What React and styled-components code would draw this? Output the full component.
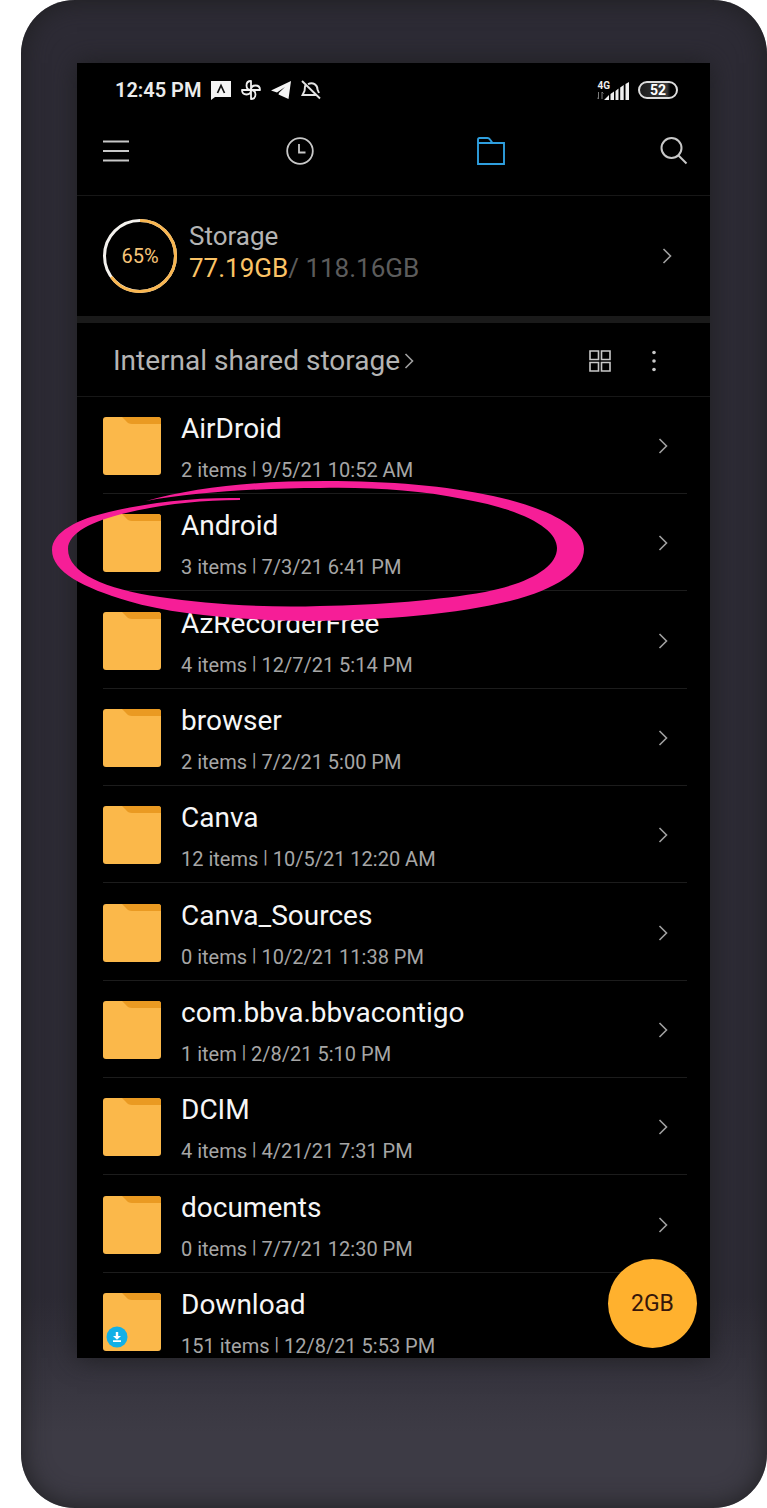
import React from "react";
import styled, { createGlobalStyle } from "styled-components";

const GlobalStyle = createGlobalStyle`
  *, *::before, *::after { box-sizing: border-box; }
  body {
    margin: 0;
    background: #fff;
    font-family: Roboto, "Liberation Sans", sans-serif;
  }
`;

const Page = styled.div`
  padding-left: 21px;
`;

const Phone = styled.div`
  min-height: 100vh;
  padding: 63px 57px 150px 56px;
  border-radius: 54px;
  background: linear-gradient(#2d2b35 0%, #2d2b35 86%, #3d3b45 95%, #3d3b45 100%);
  box-shadow: inset 0 0 26px #1f1f21;
`;

const Screen = styled.main`
  position: relative;
  background: #000;
  color: #b4b4b4;
  box-shadow: 0 0 24px #1f1f22;
`;

const StatusBar = styled.div`
  display: flex;
  justify-content: space-between;
  align-items: center;
  height: 54px;
  padding: 0 32px 0 38px;
  color: #ececec;
`;

const StatusGroup = styled.div`
  display: flex;
  align-items: center;
  gap: ${(p) => p.$gap}px;
`;

const Time = styled.time`
  font-size: 20px;
  font-weight: 600;
  line-height: 24px;
`;

const Network = styled.div`
  display: flex;
  align-items: flex-end;
`;

const NetworkType = styled.span`
  display: flex;
  flex-direction: column;
  align-items: flex-start;
  margin-right: -6px;
  font-size: 10px;
  font-weight: 700;
  line-height: 10px;
`;

const Battery = styled.span`
  width: 40px;
  height: 18px;
  border: 2px solid #dcdcdc;
  border-radius: 9px;
  background: linear-gradient(90deg, #1c1c1c, #3a3a3a 75%, #000 85%);
  color: #fff;
  font-size: 14px;
  font-weight: 700;
  line-height: 14px;
  text-align: center;
`;

const Nav = styled.nav`
  display: flex;
  justify-content: space-between;
  align-items: center;
  height: 79px;
  padding: 0 22px 10px 25px;
  border-bottom: 1px solid #171717;
`;

const NavTabs = styled.div`
  display: flex;
  gap: 163px;
`;

const IconButton = styled.button`
  display: flex;
  padding: 0;
  border: 0;
  background: none;
  color: ${(p) => (p.$active ? "#2f9fdf" : "#c8c8c8")};
  cursor: pointer;
`;

const StorageLink = styled.a`
  display: flex;
  align-items: center;
  gap: 12px;
  height: 120px;
  padding: 0 38px 0 26px;
  color: #b4b4b4;
  text-decoration: none;
`;

const Gauge = styled.div`
  display: grid;
  place-items: center;
  width: 74px;
  height: 74px;
  color: #f7c478;
  font-size: 20px;
  line-height: 24px;
  > * { grid-area: 1 / 1; }
`;

const StorageText = styled.div`
  flex: 1;
  padding-bottom: 8px;
  font-size: 26px;
  line-height: 32px;
`;

const Used = styled.span`
  color: #fbc366;
`;

const Total = styled.span`
  color: #5c5c5c;
`;

const PathBar = styled.div`
  display: flex;
  align-items: center;
  justify-content: space-between;
  height: 81px;
  padding: 2px 45px 0 36px;
  border-top: 7px solid #1a1a1a;
  border-bottom: 1px solid #171717;
`;

const PathLink = styled.a`
  display: flex;
  align-items: center;
  gap: 4px;
  color: #b4b4b4;
  font-size: 28px;
  line-height: 32px;
  text-decoration: none;
`;

const PathActions = styled.div`
  display: flex;
  align-items: center;
  gap: 32px;
`;

const FolderList = styled.ul`
  display: flex;
  flex-direction: column;
  justify-content: space-between;
  min-height: 961px;
  margin: 0;
  padding: 0 23px 0 26px;
  list-style: none;
`;

const FolderItem = styled.li`
  position: relative;
  height: 97px;
  border-bottom: 1px solid #1c1c1c;
  &:last-child {
    height: 85px;
    border-bottom: 0;
  }
`;

const FolderLink = styled.a`
  display: flex;
  gap: 20px;
  padding: 16px 19px 0 0;
  color: #fff;
  text-decoration: none;
  > svg { flex: none; }
`;

const FolderArt = styled.svg`
  margin-top: 4px;
`;

const FolderText = styled.div`
  flex: 1;
`;

const FolderName = styled.div`
  font-size: 28px;
  line-height: 32px;
  color: #f6f6f6;
`;

const FolderMeta = styled.div`
  margin-top: 14px;
  font-size: 20px;
  line-height: 23px;
  color: #a6a6a6;
`;

const Bar = styled.span`
  font-size: 18px;
  vertical-align: 3px;
  line-height: 1;
`;

const ChevronIcon = styled.svg`
  flex: none;
`;

const RowChevron = styled(ChevronIcon)`
  margin-top: 25px;
`;

const Circled = styled.svg`
  position: absolute;
  z-index: 1;
  left: -53px;
  top: -18px;
  pointer-events: none;
`;

const CleanButton = styled.button`
  position: absolute;
  right: 13px;
  bottom: 10px;
  width: 89px;
  height: 89px;
  padding: 0;
  border: 0;
  border-radius: 50%;
  background: #ffb12e;
  color: #35160a;
  font: 23px/26px Roboto, "Liberation Sans", sans-serif;
  cursor: pointer;
`;

function Chevron({ as: Icon = ChevronIcon }) {
  return (
    <Icon width="10" height="16" viewBox="0 0 10 16" fill="none" stroke="#a0a0a0" strokeWidth="1.600" aria-hidden="true">
      <path d="M1.500 1L8.500 8L1.500 15" />
    </Icon>
  );
}

function FolderPicture({ download }) {
  return (
    <FolderArt width="58" height="58" viewBox="0 0 58 58" aria-hidden="true">
      <rect width="58" height="58" rx="3" fill="#fbb84a" />
      <path d="M19 0H55a3 3 0 0 1 3 3V7H29Q25 7 23 4Z" fill="#ea9a22" />
      {download && (
        <g>
          <circle cx="14" cy="44" r="10.500" fill="#12b0e6" />
          <path d="M12.800 39h2.400v4h2.800l-4 3.800-4-3.800h2.800zM10 47.200h8v1.800h-8z" fill="#fff" />
        </g>
      )}
    </FolderArt>
  );
}

const folders = [
  { name: "AirDroid", count: "2 items", date: "9/5/21 10:52 AM" },
  { name: "Android", count: "3 items", date: "7/3/21 6:41 PM", circled: true },
  { name: "AzRecorderFree", count: "4 items", date: "12/7/21 5:14 PM" },
  { name: "browser", count: "2 items", date: "7/2/21 5:00 PM" },
  { name: "Canva", count: "12 items", date: "10/5/21 12:20 AM" },
  { name: "Canva_Sources", count: "0 items", date: "10/2/21 11:38 PM" },
  { name: "com.bbva.bbvacontigo", count: "1 item", date: "2/8/21 5:10 PM" },
  { name: "DCIM", count: "4 items", date: "4/21/21 7:31 PM" },
  { name: "documents", count: "0 items", date: "7/7/21 12:30 PM" },
  { name: "Download", count: "151 items", date: "12/8/21 5:53 PM", download: true, last: true },
];

function Folder({ name, count, date, circled, download, last }) {
  return (
    <FolderItem>
      <FolderLink href="#">
        <FolderPicture download={download} />
        <FolderText>
          <FolderName>{name}</FolderName>
          <FolderMeta>
            {count} <Bar>|</Bar> {date}
          </FolderMeta>
        </FolderText>
        {!last && <Chevron as={RowChevron} />}
      </FolderLink>
      {circled && (
        <Circled width="540" height="150" viewBox="50 476 540 150" aria-hidden="true">
          <path
            fill="#f61e97"
            d="M146 501 C195 487 255 481 325 481 C390 481 447 486 493 496 C548 508 584 527 584 549 C584 571 557 589 510 601 C458 614 385 620 310 621 C240 620 175 615 128 601 C84 588 52 572 52 550 C52 532 78 519 109 512 C145 503 195 497 240 498 L240 500 C197 500 160 505 126 513 C92 521 68 533 68 549 C68 573 105 589 160 597 C205 604 265 608 320 606 C380 605 440 600 485 592 C530 583 557 567 557 548 C557 529 525 510 463 499 C418 490 372 487 320 488 C262 488 195 492 146 501 Z"
          />
        </Circled>
      )}
    </FolderItem>
  );
}

export default function App() {
  return (
    <Page>
      <GlobalStyle />
      <Phone>
        <Screen>
          <StatusBar>
            <StatusGroup $gap={10}>
              <Time>12:45 PM</Time>
              <svg width="20" height="20" viewBox="0 0 20 20" aria-hidden="true">
                <path d="M0 1H20V17H4L0 20Z" fill="#f4f4f4" />
                <path d="M6.500 13L10 5.500L13.500 13" fill="none" stroke="#111" strokeWidth="1.700" />
              </svg>
              <svg width="20" height="20" viewBox="0 0 20 20" fill="none" stroke="#f0f0f0" strokeWidth="1.800" strokeLinejoin="round" aria-hidden="true">
                <path d="M10 10V1C7 1 5.500 3 5.500 5.500C5.500 8 7 10 10 10H19C19 7 17 5.500 14.500 5.500C12 5.500 10 7 10 10V19C13 19 14.500 17 14.500 14.500C14.500 12 13 10 10 10H1C1 13 3 14.500 5.500 14.500C8 14.500 10 13 10 10Z" />
              </svg>
              <svg width="20" height="20" viewBox="0 0 20 20" aria-hidden="true">
                <path d="M0 10.500L20 1L17.500 19L7.500 14.500L8 12.800L14 7L6 12.500Z" fill="#f4f4f4" />
              </svg>
              <svg width="20" height="20" viewBox="0 0 20 20" fill="none" stroke="#e4e4e4" strokeWidth="1.900" aria-hidden="true">
                <path d="M1 1L19 18.500M4.500 5C3.500 7 4 9 3.500 11L1.500 15H14.500M7 4.200C12 1.500 16.500 5 16.500 9.500L18 13" />
              </svg>
            </StatusGroup>
            <StatusGroup $gap={9}>
              <Network>
                <NetworkType>
                  4G
                  <svg width="7" height="9" viewBox="0 0 7 9" fill="none" stroke="#7a7a7a" aria-hidden="true">
                    <path d="M1.500 1V8M0 6.500L1.500 8M5 8V1M5 1L6.500 2.500" />
                  </svg>
                </NetworkType>
                <svg width="25" height="18" viewBox="0 0 25 18" fill="#f0f0f0" aria-hidden="true">
                  <path d="M0 18L5 13V18ZM6.500 12L10 9.500V18H6.500ZM11.500 9L14.500 6.500V18H11.500ZM16.200 5.500L19.700 3V18H16.200ZM21.500 2L25 0V18H21.500Z" />
                </svg>
              </Network>
              <Battery>52</Battery>
            </StatusGroup>
          </StatusBar>

          <Nav>
            <IconButton aria-label="Menu">
              <svg width="28" height="28" viewBox="0 0 28 28" stroke="currentColor" strokeWidth="2.200">
                <path d="M1 4.500H27M1 14H27M1 23.500H27" />
              </svg>
            </IconButton>
            <NavTabs>
              <IconButton aria-label="Recent">
                <svg width="28" height="28" viewBox="0 0 28 28" fill="none" stroke="currentColor" strokeWidth="1.800">
                  <circle cx="14" cy="14" r="12.800" />
                  <path d="M13 7V15.500H19.500" />
                </svg>
              </IconButton>
              <IconButton aria-label="Folders" $active>
                <svg width="28" height="28" viewBox="0 0 28 28" fill="none" stroke="currentColor" strokeWidth="1.900">
                  <path d="M1 6V2.500Q1 1 2.500 1H10.500Q12 1 13 2.500L15.500 6H27V27H1V6H15.500" />
                </svg>
              </IconButton>
            </NavTabs>
            <IconButton aria-label="Search">
              <svg width="28" height="28" viewBox="0 0 28 28" fill="none" stroke="currentColor" strokeWidth="2">
                <circle cx="11.500" cy="11" r="10" />
                <path d="M18.500 18.500L26.500 26.500" />
              </svg>
            </IconButton>
          </Nav>

          <StorageLink href="#">
            <Gauge>
              <svg width="74" height="74" viewBox="0 0 74 74" fill="none" strokeWidth="3" aria-hidden="true">
                <circle cx="37" cy="37" r="35.500" stroke="#f4f2ee" />
                <circle cx="37" cy="37" r="35.500" stroke="#f9b650" pathLength="100" strokeDasharray="65 35" transform="rotate(-90 37 37)" />
              </svg>
              <span>65%</span>
            </Gauge>
            <StorageText>
              <div>Storage</div>
              <div>
                <Used>77.19GB</Used>
                <Total>/ 118.16GB</Total>
              </div>
            </StorageText>
            <Chevron />
          </StorageLink>

          <PathBar>
            <PathLink href="#">
              Internal shared storage
              <Chevron />
            </PathLink>
            <PathActions>
              <IconButton aria-label="Grid view">
                <svg width="22" height="22" viewBox="0 0 22 22" fill="none" stroke="currentColor" strokeWidth="1.600">
                  <path d="M1 1H9.500V9.500H1ZM12.500 1H21V9.500H12.500ZM1 12.500H9.500V21H1ZM12.500 12.500H21V21H12.500Z" />
                </svg>
              </IconButton>
              <IconButton aria-label="More options">
                <svg width="22" height="22" viewBox="0 0 22 22" fill="currentColor">
                  <circle cx="11" cy="2.500" r="1.800" />
                  <circle cx="11" cy="11" r="1.800" />
                  <circle cx="11" cy="19.500" r="1.800" />
                </svg>
              </IconButton>
            </PathActions>
          </PathBar>

          <FolderList>
            {folders.map((folder) => (
              <Folder key={folder.name} {...folder} />
            ))}
          </FolderList>
          <CleanButton>2GB</CleanButton>
        </Screen>
      </Phone>
    </Page>
  );
}
